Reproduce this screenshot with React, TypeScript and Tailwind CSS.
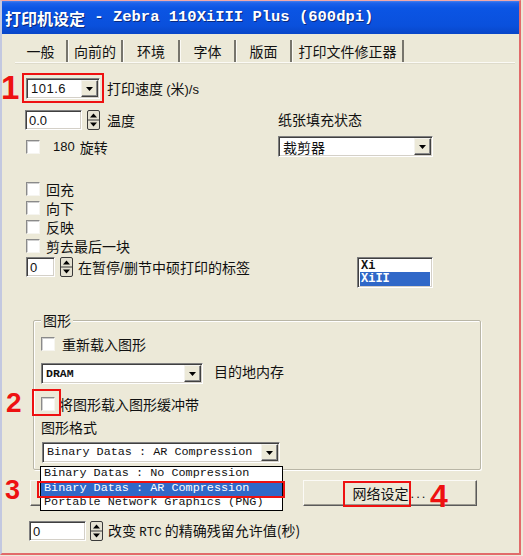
import React from "react";

function DropBtn() {
  return (
    <div className="w-[17px] h-full flex items-center justify-center bg-[#ece9d8] border border-t-[#f4f3ee] border-l-[#f4f3ee] border-r-[#404040] border-b-[#404040] shadow-[inset_-1px_-1px_0_#8a8a8a]">
      <svg width="7" height="4" viewBox="0 0 7 4">
        <path d="M0 0h7L3.5 4z" fill="#000" />
      </svg>
    </div>
  );
}

function Combo({ className, children }: { className: string; children: React.ReactNode }) {
  return (
    <div
      className={
        "flex h-[21px] bg-white border border-t-[#7f7f7f] border-l-[#7f7f7f] border-r-white border-b-white shadow-[inset_1px_1px_0_#404040,inset_-1px_-1px_0_#d4d0c8] p-[1px] " +
        className
      }
    >
      <div className="flex-1 flex items-center pl-[3px] overflow-hidden whitespace-nowrap">{children}</div>
      <DropBtn />
    </div>
  );
}

function Spinner() {
  return (
    <svg width="13" height="20" viewBox="0 0 13 20" className="shrink-0">
      <rect x="0.5" y="0.5" width="12" height="19" rx="1.5" fill="#e4e1d2" stroke="#3a3a3a" />
      <line x1="0.5" y1="10" x2="12.5" y2="10" stroke="#3a3a3a" />
      <path d="M3 7.5h7L6.5 3.5z" fill="#000" />
      <path d="M3 12.5h7L6.5 16.5z" fill="#000" />
    </svg>
  );
}

function Field({ className, children }: { className: string; children: React.ReactNode }) {
  return (
    <div
      className={
        "flex items-center bg-white border border-t-[#7f7f7f] border-l-[#7f7f7f] border-r-white border-b-white shadow-[inset_1px_1px_0_#404040,inset_-1px_-1px_0_#d4d0c8] pl-[3px] font-['Liberation_Sans',sans-serif] text-[13px] " +
        className
      }
    >
      {children}
    </div>
  );
}

function Check() {
  return (
    <div className="w-[14px] h-[14px] shrink-0 bg-white border border-t-[#8a8a8a] border-l-[#8a8a8a] border-r-[#f6f5f0] border-b-[#f6f5f0] shadow-[inset_1px_1px_0_#cfcfcf]" />
  );
}

function Btn({ className, children }: { className: string; children?: React.ReactNode }) {
  return (
    <div
      className={
        "h-[26px] flex items-center justify-center bg-[#ece9d8] border border-t-[#fbfaf6] border-l-[#fbfaf6] border-r-[#5a5a5a] border-b-[#5a5a5a] shadow-[inset_-1px_-1px_0_#9c9a90] " +
        className
      }
    >
      {children}
    </div>
  );
}

const tabs: { label: string; w: string }[] = [
  { label: "一般", w: "w-[53px]" },
  { label: "向前的", w: "w-[55px]" },
  { label: "环境", w: "w-[57px]" },
  { label: "字体", w: "w-[56px]" },
  { label: "版面", w: "w-[56px]" },
  { label: "打印文件修正器", w: "w-[112px]" },
];

export default function App() {
  return (
    <div className="relative w-[523px] h-[556px] overflow-hidden bg-[#ece9d8] text-[#111] font-['Noto_Sans_CJK_SC',sans-serif] text-[14px] leading-none">
      {/* Title bar */}
      <div className="h-[34px] flex items-center pl-[5px] pt-[1px] w-[520px] bg-[linear-gradient(180deg,#5b8ff2_0px,#1d62ea_3px,#0b55e4_8px,#0a50dc_26px,#0846c8_34px)] text-white font-bold [text-shadow:1px_1px_0_#0a2a80]">
        <span className="text-[16px] font-['Noto_Sans_CJK_SC',sans-serif]">打印机设定</span>
        <span className="text-[15.5px] font-['Liberation_Mono',monospace] whitespace-pre"> - Zebra 110XiIII Plus (600dpi)</span>
      </div>

      {/* Tabs */}
      <div className="mt-[6px] ml-[15px] flex h-[22px]">
        {tabs.map((t, i) => (
          <div
            key={t.label}
            className={
              "flex items-center justify-center border-r-2 border-r-[#77756c] " +
              t.w +
              (i === 0 ? "" : " border-l border-l-[#fbfaf5]")
            }
          >
            {t.label}
          </div>
        ))}
      </div>
      <div className="ml-[15px] w-[500px] h-[2px] bg-[#fbfaf5] border-b border-b-[#dedbcb]" />

      {/* Page */}
      <div className="pl-[26px]">
        {/* Row 1 */}
        <div className="mt-[14px] flex items-center h-[21px]">
          <Combo className="w-[74px]">
            <span className="font-['Liberation_Sans',sans-serif] text-[13px] tracking-[0.5px]">101.6</span>
          </Combo>
          <span className="ml-[7px]">
            打印速度 <span className="font-['Liberation_Sans',sans-serif] text-[13px]">(</span>米<span className="font-['Liberation_Sans',sans-serif] text-[13px]">)/s</span>
          </span>
        </div>

        {/* Row 2 */}
        <div className="mt-[11px] flex items-center h-[20px]">
          <div className="w-[252px] flex items-center -ml-[1px]">
            <Field className="w-[57px] h-[20px]">0.0</Field>
            <div className="ml-[5px]">
              <Spinner />
            </div>
            <span className="ml-[7px]">温度</span>
          </div>
          <span className="ml-[1px] -mt-[2px]">纸张填充状态</span>
        </div>

        {/* Row 3 */}
        <div className="mt-[6px] flex items-center h-[21px]">
          <div className="w-[252px] flex items-center">
            <Check />
            <span className="ml-[13px] font-['Liberation_Sans',sans-serif] text-[13px]">180</span>
            <span className="ml-[5px]">旋转</span>
          </div>
          <Combo className="w-[155px]">
            <span>裁剪器</span>
          </Combo>
        </div>

        {/* Checkbox list */}
        <div className="mt-[22px] flex flex-col">
          {["回充", "向下", "反映", "剪去最后一块"].map((s) => (
            <div key={s} className="h-[19px] flex items-center">
              <Check />
              <span className="ml-[6px]">{s}</span>
            </div>
          ))}
        </div>

        {/* Spin 0 + list */}
        <div className="mt-[2px] flex items-start h-[31px]">
          <div className="w-[331px] flex items-center h-[20px]">
            <Field className="w-[29px] h-[20px]">0</Field>
            <div className="ml-[5px]">
              <Spinner />
            </div>
            <span className="ml-[5px]">
              在暂停<span className="font-['Liberation_Sans',sans-serif]">/</span>删节中硕打印的标签
            </span>
          </div>
          <div className="w-[76px] h-[31px] bg-white border border-t-[#7f7f7f] border-l-[#7f7f7f] border-r-white border-b-white shadow-[inset_1px_1px_0_#404040,inset_-1px_-1px_0_#d4d0c8] px-[2px] pt-[2px] flex flex-col font-['Liberation_Mono',monospace] font-bold text-[12px] leading-[12px]">
            <div className="h-[12px] flex items-center pl-[1px]">Xi</div>
            <div className="h-[14px] flex items-center pl-[1px] bg-[#3068c8] text-white">XiII</div>
          </div>
        </div>

        {/* Group box */}
        <div className="relative mt-[32px] ml-[7px] w-[448px] h-[150px] border border-[#b9b6a6] shadow-[inset_1px_1px_0_#ffffff,1px_1px_0_#ffffff] rounded-[2px] pl-[7px]">
          <div className="absolute -top-[8px] left-[7px] px-[2px] bg-[#ece9d8]">图形</div>
          <div className="mt-[13px] h-[19px] flex items-center">
            <Check />
            <span className="ml-[7px]">重新载入图形</span>
          </div>
          <div className="mt-[10px] flex items-center h-[21px]">
            <Combo className="w-[162px]">
              <span className="font-['Liberation_Mono',monospace] font-bold text-[11.5px]">DRAM</span>
            </Combo>
            <span className="ml-[11px] -mt-[6px]">目的地内存</span>
          </div>
          <div className="mt-[12px] h-[15px] flex items-center">
            <Check />
            <span className="ml-[4px]">将图形载入图形缓冲带</span>
          </div>
          <div className="mt-[8px] h-[16px] flex items-center">图形格式</div>
          <div className="mt-[7px] ml-[1px]">
            <Combo className="w-[238px]">
              <span className="font-['Liberation_Mono',monospace] text-[11.8px] whitespace-pre">Binary Datas : AR Compression</span>
            </Combo>
          </div>
        </div>

        {/* Buttons */}
        <div className="mt-[10px] flex">
          <Btn className="ml-[4px] w-[250px]" />
          <Btn className="ml-[23px] w-[174px]">
            <span>网络设定</span>
            <span className="font-['Liberation_Sans',sans-serif] text-[13px] ml-[2px] tracking-[2px]">...</span>
          </Btn>
        </div>

        {/* Last spin */}
        <div className="mt-[15px] flex items-center h-[20px]">
          <Field className="ml-[3px] w-[57px] h-[20px]">0</Field>
          <div className="ml-[4px]">
            <Spinner />
          </div>
          <span className="ml-[5px] whitespace-pre">
            改变 <span className="font-['Liberation_Mono',monospace] text-[12.5px]">RTC</span> 的精确残留允许值(秒)
          </span>
        </div>
      </div>

      {/* Open dropdown list */}
      <div className="absolute left-[40px] top-[466px] w-[243px] h-[45px] bg-white border border-black flex flex-col font-['Liberation_Mono',monospace] text-[11.8px] whitespace-pre">
        <div className="h-[14px] flex items-center pl-[3px]">Binary Datas : No Compression</div>
        <div className="h-[15px] flex items-center pl-[3px] bg-[#3068c8] text-white">Binary Datas : AR Compression</div>
        <div className="h-[14px] flex items-center pl-[3px]">Portable Network Graphics (PNG)</div>
      </div>

      {/* Annotations */}
      <div className="absolute left-[22px] top-[73px] w-[82px] h-[30px] border-2 border-[#ee1111]" />
      <div className="absolute left-[32px] top-[389px] w-[29px] h-[27px] border-2 border-[#ee1111]" />
      <div className="absolute left-[37px] top-[481px] w-[248px] h-[17px] border-2 border-[#ee1111]" />
      <div className="absolute left-[343px] top-[481px] w-[68px] h-[26px] border-2 border-[#ee1111]" />
      <div className="absolute left-[1px] top-[71px] text-[33px] leading-none font-bold text-[#ee1111] font-['Liberation_Sans',sans-serif]">1</div>
      <div className="absolute left-[6px] top-[389px] text-[28px] leading-none font-bold text-[#ee1111] font-['Liberation_Sans',sans-serif]">2</div>
      <div className="absolute left-[5px] top-[477px] text-[27px] leading-none font-bold text-[#ee1111] font-['Liberation_Sans',sans-serif]">3</div>
      <div className="absolute left-[430px] top-[480px] text-[32px] leading-none font-bold text-[#ee1111] font-['Liberation_Sans',sans-serif]">4</div>

      {/* Frame lines */}
      <div className="absolute left-0 top-0 w-[521px] h-[555px] border-t border-t-[#f0a8a8] border-r-2 border-r-[#e26a6a] border-b-2 border-b-[#e26a6a] border-l-2 border-l-[#c3c8e0] pointer-events-none" />
    </div>
  );
}
